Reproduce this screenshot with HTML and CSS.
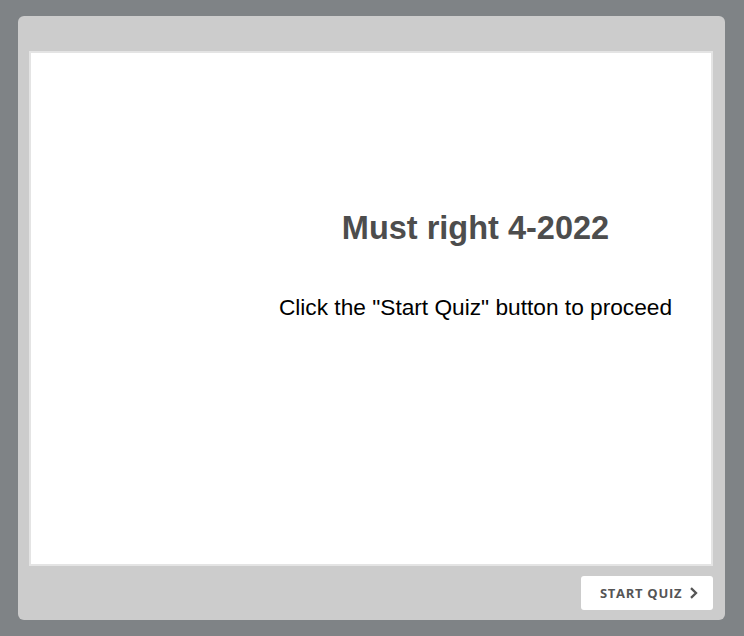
FILE: index.html
```html
<!DOCTYPE html>
<html>
<head>
<meta charset="utf-8">
<link rel="stylesheet" href="styles.css">
</head>
<body>
<div class="player">
  <div class="stage">
    <div class="slide">
      <h1 class="title">Must right 4-2022</h1>
      <p class="subtitle">Click the "Start Quiz" button to proceed</p>
    </div>
  </div>
  <div class="footer">
    <button class="start-btn">START QUIZ
      <svg class="chev" width="9" height="12" viewBox="0 0 9 12"><path d="M2 1.2 L7 6 L2 10.8" fill="none" stroke="#555" stroke-width="2.3"/></svg>
    </button>
  </div>
</div>
</body>
</html>
```
FILE: styles.css
```css
html, body {
  margin: 0;
  padding: 0;
}
body {
  background: #7f8386;
  width: 744px;
  height: 636px;
  overflow: hidden;
}
.player {
  margin: 16px 0 0 18px;
  width: 707px;
  height: 604px;
  box-sizing: border-box;
  background: #cccccc;
  border-radius: 6px;
  padding: 35px 12px 0 11px;
  display: flex;
  flex-direction: column;
}
.stage {
  height: 515px;
  box-sizing: border-box;
  border: 2px solid #e4e4e4;
  background: #fff;
}
.slide {
  padding-left: 209px;
  display: flex;
  flex-direction: column;
  align-items: center;
  font-family: "Liberation Sans", Arial, sans-serif;
}
.title {
  margin: 155px 0 0;
  font-size: 32.5px;
  font-weight: bold;
  color: #4d4d4d;
  line-height: 40px;
}
.subtitle {
  margin: 46px 0 0;
  font-size: 22.7px;
  color: #000;
  line-height: 26px;
}
.footer {
  display: flex;
  justify-content: flex-end;
  padding-top: 10px;
}
.start-btn {
  width: 132px;
  height: 34px;
  border: none;
  border-radius: 3px;
  background: #fff;
  font-family: "Open Sans", sans-serif;
  font-weight: bold;
  font-size: 13px;
  color: #555;
  letter-spacing: 0.7px;
  display: flex;
  align-items: center;
  justify-content: flex-start;
  padding: 0 0 0 19px;
  gap: 7px;
}
.chev {
  display: block;
}
```
